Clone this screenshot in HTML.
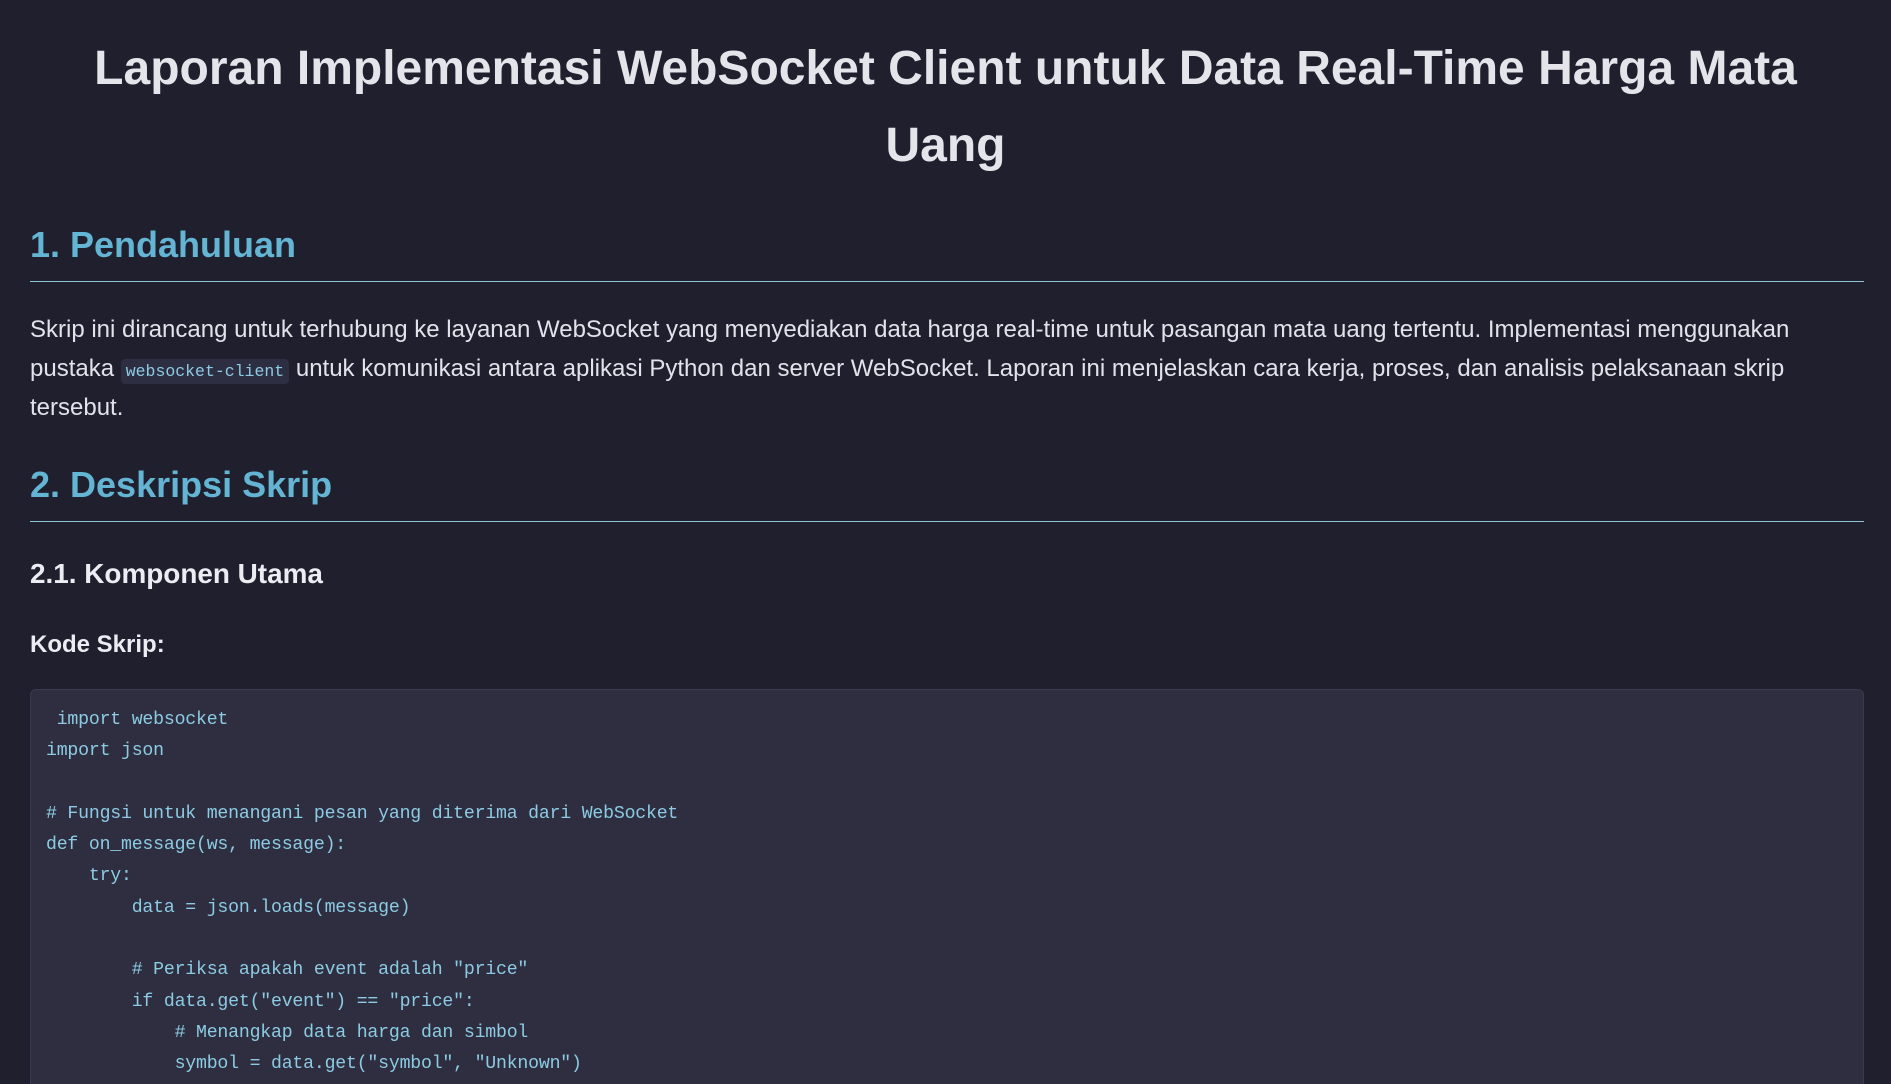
<!DOCTYPE html>
<html><head><meta charset="utf-8">
<style>
html,body{margin:0;padding:0;background:#1f1f2e;width:1891px;height:1084px;overflow:hidden}
body{font-family:"Liberation Sans",sans-serif;color:#e2e2ea;position:relative}
.a{position:absolute;left:30px;margin:0;white-space:nowrap}
h1{position:absolute;left:0;width:1891px;top:30px;margin:0;text-align:center;font-size:48px;line-height:77px;font-weight:bold;color:#e4e4ea}
h2{font-size:36px;line-height:42px;color:#64b5d3;font-weight:bold}
.hr{position:absolute;left:30px;width:1834px;height:1px;background:#8fc4d8}
p.t{position:absolute;left:30px;width:1834px;top:311px;margin:0;font-size:24px;line-height:38.8px;color:#e2e2ea}
code.i{font-family:"Liberation Mono",monospace;font-size:16.5px;line-height:1;color:#8ccbe3;background:#2e2e42;padding:3px 5px;border-radius:4px;white-space:nowrap}
h3{font-size:27.9px;line-height:32px;font-weight:bold;color:#ececf2}
.k{font-size:24px;line-height:28px;font-weight:bold;color:#ececf2}
pre{position:absolute;left:30px;top:689px;width:1834px;height:420px;margin:0;background:#2e2e40;border:1px solid #3a3a4e;border-radius:6px;padding:15px 0 0 15px;box-sizing:border-box;font-family:"Liberation Mono",monospace;font-size:18.2px;line-height:31.3px;color:#8ccbe3;letter-spacing:-0.2px}
</style></head><body>
<h1>Laporan Implementasi WebSocket Client untuk Data Real-Time Harga Mata<br>Uang</h1>
<h2 class="a" style="top:224px">1. Pendahuluan</h2>
<div class="hr" style="top:281px"></div>
<p class="t">Skrip ini dirancang untuk terhubung ke layanan WebSocket yang menyediakan data harga real-time untuk pasangan mata uang tertentu. Implementasi menggunakan<br>pustaka <code class="i">websocket-client</code> untuk komunikasi antara aplikasi Python dan server WebSocket. Laporan ini menjelaskan cara kerja, proses, dan analisis pelaksanaan skrip<br>tersebut.</p>
<h2 class="a" style="top:464px">2. Deskripsi Skrip</h2>
<div class="hr" style="top:521px"></div>
<h3 class="a" style="top:558px">2.1. Komponen Utama</h3>
<div class="a k" style="top:631px">Kode Skrip:</div>
<pre> import websocket
import json

# Fungsi untuk menangani pesan yang diterima dari WebSocket
def on_message(ws, message):
    try:
        data = json.loads(message)

        # Periksa apakah event adalah "price"
        if data.get("event") == "price":
            # Menangkap data harga dan simbol
            symbol = data.get("symbol", "Unknown")</pre>
</body></html>
